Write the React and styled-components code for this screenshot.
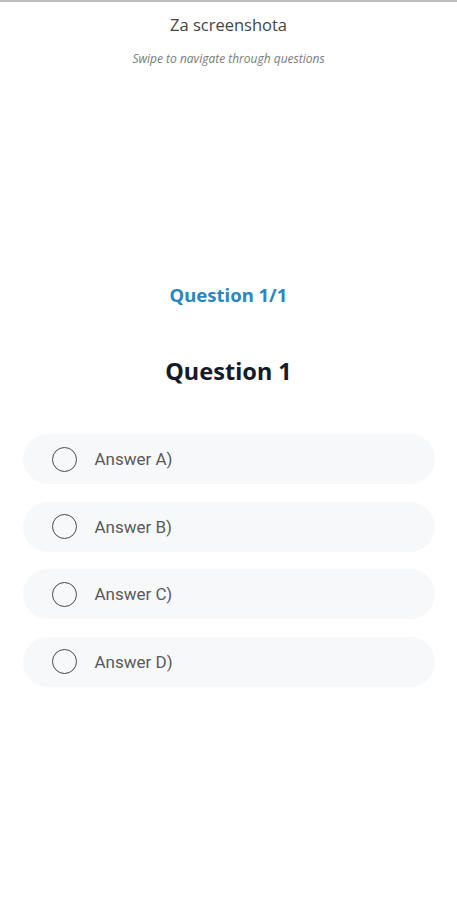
import React from "react";
import styled, { createGlobalStyle } from "styled-components";

const Global = createGlobalStyle`
  html, body { margin: 0; padding: 0; background: #ffffff; }
  body { font-family: "Noto Sans", "Open Sans", sans-serif; }
`;

const Page = styled.div`
  min-height: 900px;
  background: #ffffff;
  border-top: 2px solid #bdbdbd;
  box-sizing: border-box;
  display: flex;
  flex-direction: column;
  align-items: center;
`;

const Title = styled.h1`
  margin: 13px 0 0;
  font-family: "Open Sans", sans-serif;
  font-weight: 400;
  font-size: 16.5px;
  line-height: 20px;
  color: #454545;
`;

const Subtitle = styled.p`
  margin: 16px 0 0;
  font-family: "Open Sans", sans-serif;
  font-style: italic;
  font-size: 12px;
  line-height: 16px;
  color: #7a7a7a;
`;

const Counter = styled.div`
  margin-top: 216px;
  font-family: "Noto Sans", sans-serif;
  font-weight: 700;
  font-size: 18.5px;
  line-height: 24px;
  color: #2a86c2;
`;

const Question = styled.h2`
  margin: 49px 0 0;
  font-family: "Noto Sans", sans-serif;
  font-weight: 700;
  font-size: 23.5px;
  line-height: 30px;
  color: #141c2b;
`;

const Answers = styled.div`
  margin-top: 48px;
  width: 412px;
  display: flex;
  flex-direction: column;
  gap: 17.5px;
`;

const AnswerRow = styled.label`
  height: 50px;
  border-radius: 25px;
  background: #f7f8fa;
  display: flex;
  align-items: center;
  padding-left: 29px;
  gap: 18px;
  cursor: pointer;
`;

const Radio = styled.span`
  width: 23px;
  height: 23px;
  border-radius: 50%;
  border: 1.5px solid #4a4a4a;
  flex: none;
`;

const AnswerText = styled.span`
  font-family: "Roboto", sans-serif;
  font-size: 17px;
  color: #5a5a5a;
`;

const answers = ["Answer A)", "Answer B)", "Answer C)", "Answer D)"];

export default function App() {
  return (
    <>
      <Global />
      <Page>
        <Title>Za screenshota</Title>
        <Subtitle>Swipe to navigate through questions</Subtitle>
        <Counter>Question 1/1</Counter>
        <Question>Question 1</Question>
        <Answers>
          {answers.map((a) => (
            <AnswerRow key={a}>
              <Radio />
              <AnswerText>{a}</AnswerText>
            </AnswerRow>
          ))}
        </Answers>
      </Page>
    </>
  );
}
